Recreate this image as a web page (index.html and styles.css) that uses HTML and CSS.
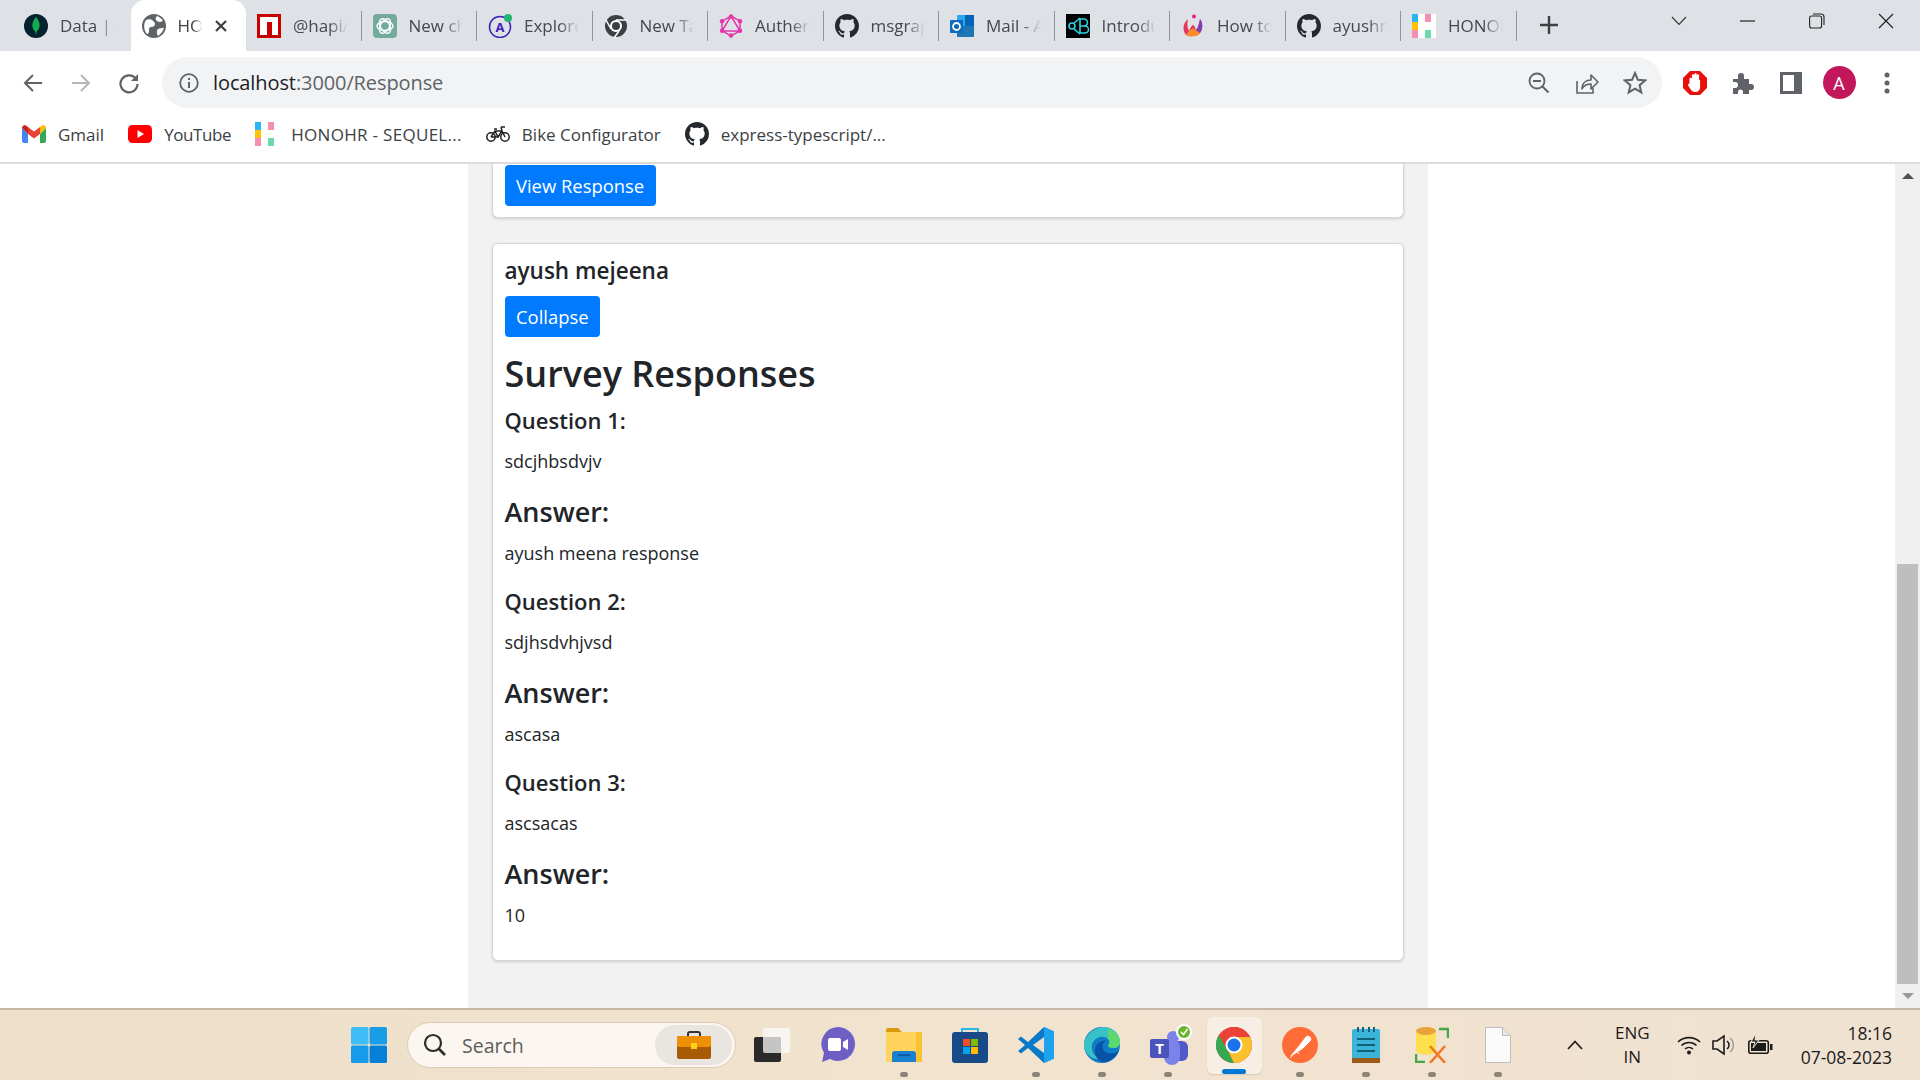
FILE: index.html
```html
<!DOCTYPE html>
<html>
<head>
    <title>HONOHR - Response</title>
    <link rel="stylesheet" href="styles.css">
</head>
<body>
    <svg class="defs" width="0" height="0">
        <symbol id="github" viewBox="0 0 16 16">
            <path d="M8 0C3.58 0 0 3.58 0 8c0 3.54 2.29 6.53 5.47 7.59.4.07.55-.17.55-.38 0-.19-.01-.82-.01-1.49-2.01.37-2.53-.49-2.69-.94-.09-.23-.48-.94-.82-1.13-.28-.15-.68-.52-.01-.53.63-.01 1.08.58 1.23.82.72 1.21 1.87.87 2.33.66.07-.52.28-.87.51-1.07-1.78-.2-3.64-.89-3.64-3.95 0-.87.31-1.59.82-2.15-.08-.2-.36-1.02.08-2.12 0 0 .67-.21 2.2.82.64-.18 1.32-.27 2-.27.68 0 1.36.09 2 .27 1.53-1.04 2.2-.82 2.2-.82.44 1.1.16 1.92.08 2.12.51.56.82 1.27.82 2.15 0 3.07-1.87 3.75-3.65 3.95.29.25.54.73.54 1.48 0 1.07-.01 1.93-.01 2.2 0 .21.15.46.55.38A8.013 8.013 0 0016 8c0-4.42-3.58-8-8-8z" fill="#24292e"/>
        </symbol>
        <symbol id="honohr" viewBox="0 0 24 24">
            <rect width="24" height="24" fill="#fff"/>
            <rect width="6" height="8" fill="#29b6f6"/>
            <rect y="8" width="6" height="8" fill="#ffc107"/>
            <rect y="16" width="6" height="8" fill="#f48fb1"/>
            <rect x="13" width="6" height="8" fill="#f48fb1"/>
            <rect x="13" y="16" width="6" height="8" fill="#69dba6"/>
        </symbol>
    </svg>

    <div class="tabstrip">
        <div class="tabs">
            <div class="tab first-tab">
                <svg class="favicon" viewBox="0 0 24 24"><circle cx="12" cy="12" r="12" fill="#04222d"/><path d="M12 3c3 3.5 4 6.5 3.5 9.5-.4 2.6-2 4.3-3 5.2l-.3 3h-.5l-.3-3c-1-.9-2.6-2.6-3-5.2C8 9.500 9 6.500 12 3z" fill="#13aa52"/></svg>
                <span class="tab-title">Data | Cloud</span>
            </div>
            <div class="tab active">
                <svg class="favicon" viewBox="0 0 24 24"><circle cx="12" cy="12" r="12" fill="#5f6368"/><path d="M4 6c2-1 5-1 6 0s3 2 3 4-2 3-4 3-2 2-2 4-1 3-2 3C2 17 1 10 4 6zM15 2c3 1 5 3 6 5l-3 1c-2 0-3-1-4-2s0-3 1-4zM16 15c2-1 4-1 6-1-1 3-3 6-6 8-1-2-2-5 0-7z" fill="#fff"/></svg>
                <span class="tab-title">HONOHR</span>
                <svg class="tab-close" viewBox="0 0 14 14"><path d="M2 2l10 10M12 2L2 12" stroke="#3c4043" stroke-width="2.200"/></svg>
            </div>
            <div class="tab">
                <svg class="favicon" viewBox="0 0 24 24"><rect width="24" height="24" fill="#c80000"/><rect x="3" y="3" width="18" height="18" fill="#fff"/><rect x="10" y="8" width="5" height="13" fill="#c80000"/></svg>
                <span class="tab-title">@hapi/joi</span>
            </div>
            <div class="tab">
                <svg class="favicon" viewBox="0 0 24 24"><rect width="24" height="24" rx="4" fill="#74aa9c"/><g fill="none" stroke="#fff" stroke-width="1.400"><ellipse cx="12" cy="12" rx="8" ry="4.500"/><ellipse cx="12" cy="12" rx="8" ry="4.500" transform="rotate(60 12 12)"/><ellipse cx="12" cy="12" rx="8" ry="4.500" transform="rotate(120 12 12)"/></g></svg>
                <span class="tab-title">New chat</span>
            </div>
            <div class="tab">
                <svg class="favicon" viewBox="0 0 24 24"><circle cx="12" cy="13" r="10.500" fill="none" stroke="#3f20ba" stroke-width="1.500"/><text x="12" y="18" class="icon-letter" fill="#3f20ba" font-size="13">A</text><circle cx="20" cy="4" r="4" fill="#22b573"/></svg>
                <span class="tab-title">Explorer</span>
            </div>
            <div class="tab">
                <svg class="favicon" viewBox="0 0 24 24"><circle cx="12" cy="12" r="11" fill="#3c4043"/><circle cx="12" cy="12" r="6" fill="#fff"/><circle cx="12" cy="12" r="4" fill="#3c4043"/><path d="M12 6h10M7 15L2 6M15 17l-5 7" stroke="#fff" stroke-width="1.500"/></svg>
                <span class="tab-title">New Tab</span>
            </div>
            <div class="tab">
                <svg class="favicon" viewBox="0 0 24 24"><path d="M12 2l9 5.200v9.600L12 22l-9-5.200V7.200zM12 2L3 17h18z" fill="none" stroke="#e535ab" stroke-width="1.500"/><g fill="#e535ab"><circle cx="12" cy="2.500" r="2.200"/><circle cx="21" cy="7.200" r="2.200"/><circle cx="21" cy="16.800" r="2.200"/><circle cx="12" cy="21.500" r="2.200"/><circle cx="3" cy="16.800" r="2.200"/><circle cx="3" cy="7.200" r="2.200"/></g></svg>
                <span class="tab-title">Authentication</span>
            </div>
            <div class="tab">
                <svg class="favicon"><use href="#github"/></svg>
                <span class="tab-title">msgraph</span>
            </div>
            <div class="tab">
                <svg class="favicon" viewBox="0 0 24 24"><rect x="7" y="1" width="17" height="22" rx="1" fill="#28a8ea"/><rect x="15" y="1" width="9" height="11" fill="#0364b8"/><path d="M7 12l17 0v11H7z" fill="#14447d" opacity=".5"/><rect y="6" width="13" height="13" rx="1" fill="#0f6cbd"/><circle cx="6.500" cy="12.500" r="3.500" fill="none" stroke="#fff" stroke-width="1.800"/></svg>
                <span class="tab-title">Mail - Ayush</span>
            </div>
            <div class="tab">
                <svg class="favicon" viewBox="0 0 24 24"><rect width="24" height="24" fill="#000"/><g fill="none" stroke="#2bd3e6" stroke-width="1.600"><circle cx="6" cy="12" r="3"/><path d="M14 5h4a3 3 0 0 1 0 7h-4zM14 12h5a3.500 3.500 0 0 1 0 7h-5zM8 9l6-5M8 15l6 5"/></g></svg>
                <span class="tab-title">Introduction</span>
            </div>
            <div class="tab">
                <svg class="favicon" viewBox="0 0 24 24"><path d="M7 5C2 9 1 16 5 21c4 2 11 2 14-2 3-4 3-10 0-14-1 5-2 9-4 11-1-3-2-5-3-5-2 1-3 4-4 6-2-3-2-8-1-12z" fill="#e8355b"/><path d="M5 21c4 2 11 2 14-2l-4-3-3-2-4 3z" fill="#fb8c23"/><path d="M19 5c3 4 3 10 0 14l-4-3c2-2 3-6 4-11z" fill="#7b3fb5"/><circle cx="13" cy="2.500" r="2" fill="#e91e8c"/></svg>
                <span class="tab-title">How to use</span>
            </div>
            <div class="tab">
                <svg class="favicon"><use href="#github"/></svg>
                <span class="tab-title">ayushmeena</span>
            </div>
            <div class="tab">
                <svg class="favicon"><use href="#honohr"/></svg>
                <span class="tab-title">HONOHR</span>
            </div>
        </div>
        <svg class="new-tab" viewBox="0 0 18 18"><path d="M9 0v18M0 9h18" stroke="#3c4043" stroke-width="2.400"/></svg>
        <div class="window-controls">
            <div class="window-btn"><svg width="16" height="10" viewBox="0 0 16 10"><path d="M1 1l7 7.500L15 1" fill="none" stroke="#333" stroke-width="1.100"/></svg></div>
            <div class="window-btn"><svg width="16" height="4" viewBox="0 0 16 4"><path d="M0 2h15" stroke="#222" stroke-width="1.200"/></svg></div>
            <div class="window-btn"><svg width="16" height="16" viewBox="0 0 16 16"><rect x=".6" y="3" width="12" height="12" rx="2" fill="none" stroke="#222" stroke-width="1.100"/><path d="M4 1h8a3 3 0 0 1 3 3v8" fill="none" stroke="#222" stroke-width="1.100"/></svg></div>
            <div class="window-btn"><svg width="16" height="16" viewBox="0 0 16 16"><path d="M1 1l14 14M15 1L1 15" stroke="#222" stroke-width="1.200"/></svg></div>
        </div>
    </div>

    <div class="toolbar">
        <div class="tool-btn"><svg width="20" height="20" viewBox="0 0 20 20"><path d="M19 10H3M10 2l-8 8 8 8" fill="none" stroke="#5f6368" stroke-width="2"/></svg></div>
        <div class="tool-btn"><svg width="20" height="20" viewBox="0 0 20 20"><path d="M1 10h16M10 2l8 8-8 8" fill="none" stroke="#b4b7bb" stroke-width="2"/></svg></div>
        <div class="tool-btn"><svg width="22" height="22" viewBox="0 0 22 22"><path d="M18 7a8.500 8.500 0 1 0 1.500 5" fill="none" stroke="#5f6368" stroke-width="2.200"/><path d="M20 2v7h-7z" fill="#5f6368"/></svg></div>
        <div class="omnibox">
            <svg class="info-icon" width="20" height="20" viewBox="0 0 20 20"><circle cx="10" cy="10" r="8.800" fill="none" stroke="#5f6368" stroke-width="1.800"/><path d="M10 9v6M10 5v2" stroke="#5f6368" stroke-width="2"/></svg>
            <span class="url"><span class="url-host">localhost</span>:3000/Response</span>
            <div class="omni-actions">
                <div class="tool-btn"><svg width="22" height="22" viewBox="0 0 22 22"><circle cx="9" cy="9" r="7.500" fill="none" stroke="#5f6368" stroke-width="1.800"/><path d="M5 9h8M14.500 14.500l6 6" stroke="#5f6368" stroke-width="2"/></svg></div>
                <div class="tool-btn"><svg width="24" height="22" viewBox="0 0 24 22"><path d="M2 9v12h16v-5" fill="none" stroke="#5f6368" stroke-width="1.600"/><path d="M7 17c0-6 4-9 9-9V3l7 7-7 7v-5c-4 0-7 1-9 5z" fill="none" stroke="#5f6368" stroke-width="1.600" stroke-linejoin="round"/></svg></div>
                <div class="tool-btn"><svg width="24" height="24" viewBox="0 0 24 24"><path d="M12 2l2.900 6.800 7.300.6-5.600 4.800 1.700 7.200-6.300-3.800-6.300 3.800 1.700-7.200-5.600-4.800 7.300-.6z" fill="none" stroke="#5f6368" stroke-width="2"/></svg></div>
            </div>
        </div>
        <div class="tool-btn"><svg width="24" height="24" viewBox="0 0 24 24"><path d="M7 0h10l7 7v10l-7 7H7l-7-7V7z" fill="#e8100d"/><path d="M6.500 12.500V8a1.200 1.200 0 0 1 2.400 0V4.500a1.200 1.200 0 0 1 2.400 0V3.500a1.200 1.200 0 0 1 2.400 0v1a1.200 1.200 0 0 1 2.400 0V9l1 0v7c0 3-2 5-5 5-2 0-3-1-4-2l-3-4.500c-.5-1 .9-2.400 1.400-2z" fill="#fff"/></svg></div>
        <div class="tool-btn"><svg width="22" height="22" viewBox="0 0 22 22"><path d="M1 7h5V4a3 3 0 0 1 6 0v3h5v5h2a3 3 0 0 1 0 6h-2v4H11v-2a2.500 2.500 0 0 0-5 0v2H1v-6h2a3 3 0 0 0 0-6H1z" fill="#5f6368"/></svg></div>
        <div class="tool-btn"><svg width="22" height="22" viewBox="0 0 22 22"><rect width="22" height="22" fill="#5f6368"/><rect x="3" y="3" width="11" height="16" fill="#fff"/></svg></div>
        <div class="tool-btn"><div class="avatar">A</div></div>
        <div class="tool-btn"><svg width="6" height="22" viewBox="0 0 6 22"><circle cx="3" cy="3" r="2.500" fill="#5f6368"/><circle cx="3" cy="11" r="2.500" fill="#5f6368"/><circle cx="3" cy="19" r="2.500" fill="#5f6368"/></svg></div>
    </div>

    <div class="bookmarks">
        <div class="bookmark">
            <svg class="bookmark-icon" viewBox="0 0 24 18"><path d="M0 3v13a2 2 0 0 0 2 2h4V9z" fill="#4285f4"/><path d="M24 3v13a2 2 0 0 1-2 2h-4V9z" fill="#34a853"/><path d="M18 9V2l3-2c1 0 3 1 3 3z" fill="#fbbc04"/><path d="M6 9V2L3 0C2 0 0 1 0 3z" fill="#c5221f"/><path d="M6 2l6 4.500L18 2v7l-6 4.500L6 9z" fill="#ea4335"/></svg>
            <span>Gmail</span>
        </div>
        <div class="bookmark">
            <svg class="bookmark-icon" viewBox="0 0 24 18"><rect width="24" height="18" rx="4.500" fill="#f00"/><path d="M9.500 5l6.500 4-6.500 4z" fill="#fff"/></svg>
            <span class="tight">YouTube</span>
        </div>
        <div class="bookmark">
            <svg class="bookmark-icon"><use href="#honohr"/></svg>
            <span class="loose">HONOHR - SEQUEL...</span>
        </div>
        <div class="bookmark">
            <svg class="bookmark-icon" viewBox="0 0 24 18"><g fill="none" stroke="#222" stroke-width="1.500"><circle cx="5" cy="12" r="4.200"/><circle cx="19" cy="12" r="4.200"/><path d="M5 12l4-6h7l3 6M9 6l3 6h-7M12 12l4-6M15 2l1 4M8 4h3M15 2h4"/></g></svg>
            <span>Bike Configurator</span>
        </div>
        <div class="bookmark">
            <svg class="bookmark-icon"><use href="#github"/></svg>
            <span>express-typescript/...</span>
        </div>
    </div>

    <div class="viewport">
        <div class="page">
            <div class="gutter">
                <div class="card card-clipped">
                    <button class="btn">View Response</button>
                </div>
                <div class="card">
                    <h5 class="card-name">ayush mejeena</h5>
                    <button class="btn">Collapse</button>
                    <h2 class="survey-title">Survey Responses</h2>
                    <h4 class="question first">Question 1:</h4>
                    <p class="value">sdcjhbsdvjv</p>
                    <h3 class="answer">Answer:</h3>
                    <p class="value after-answer">ayush meena response</p>
                    <h4 class="question">Question 2:</h4>
                    <p class="value">sdjhsdvhjvsd</p>
                    <h3 class="answer">Answer:</h3>
                    <p class="value after-answer">ascasa</p>
                    <h4 class="question">Question 3:</h4>
                    <p class="value">ascsacas</p>
                    <h3 class="answer">Answer:</h3>
                    <p class="value after-answer">10</p>
                </div>
            </div>
        </div>
        <div class="scrollbar">
            <div class="scroll-arrow up"></div>
            <div class="scroll-track"><div class="scroll-thumb"></div></div>
            <div class="scroll-arrow down"></div>
        </div>
    </div>

    <div class="taskbar">
        <div class="task-item">
            <svg width="36" height="36" viewBox="0 0 36 36"><rect width="17.500" height="17.500" rx="1.500" fill="#3fbdf7"/><rect x="18.500" width="17.500" height="17.500" rx="1.500" fill="#1a9de8"/><rect y="18.500" width="17.500" height="17.500" rx="1.500" fill="#159be9"/><rect x="18.500" y="18.500" width="17.500" height="17.500" rx="1.500" fill="#0580d8"/></svg>
        </div>
        <div class="search-pill">
            <svg width="24" height="24" viewBox="0 0 24 24"><circle cx="10" cy="10" r="8" fill="none" stroke="#2b2b2b" stroke-width="2.200"/><path d="M16 16l6 6" stroke="#2b2b2b" stroke-width="2.600"/></svg>
            <span class="search-label">Search</span>
            <div class="search-badge">
                <svg width="34" height="28" viewBox="0 0 34 28"><path d="M11 6V3a2 2 0 0 1 2-2h8a2 2 0 0 1 2 2v3" fill="none" stroke="#333" stroke-width="2"/><rect y="5" width="34" height="23" rx="2" fill="#a85a05"/><rect y="5" width="34" height="11" rx="2" fill="#ee8f05"/><rect x="14" y="12" width="6" height="6" fill="#fcd116"/></svg>
            </div>
        </div>
        <div class="task-icons">
            <div class="task-item">
                <svg width="36" height="34" viewBox="0 0 36 34"><rect y="9" width="27" height="25" rx="2" fill="#2a2a2a"/><rect x="9" width="27" height="25" rx="2" fill="#fafafa" opacity=".75"/></svg>
            </div>
            <div class="task-item">
                <svg width="34" height="36" viewBox="0 0 34 36"><path d="M17 0a17 17 0 1 1-8 32l-8 3 2-9A17 17 0 0 1 17 0z" fill="#6d5fc4"/><rect x="7" y="11" width="13" height="13" rx="2" fill="#fff"/><path d="M22 15l5-3v11l-5-3z" fill="#fff"/></svg>
            </div>
            <div class="task-item running">
                <svg width="36" height="34" viewBox="0 0 36 34"><path d="M0 2a2 2 0 0 1 2-2h10l4 4h-16z" fill="#d99a0c"/><rect y="4" width="36" height="30" rx="1" fill="#ffd45e"/><path d="M6 34V26a3 3 0 0 1 3-3h18a3 3 0 0 1 3 3v8z" fill="#1b7fd0"/><path d="M12 27h12" stroke="#0a4f91" stroke-width="1.500"/><rect x="30" y="4" width="6" height="30" fill="#f3b612" opacity=".6"/></svg>
            </div>
            <div class="task-item">
                <svg width="36" height="36" viewBox="0 0 36 36"><path d="M10 6V2h16v4" fill="none" stroke="#2ab5ee" stroke-width="2"/><rect y="5" width="36" height="31" rx="3" fill="#174a86"/><rect x="11" y="12" width="7" height="7" fill="#f25022"/><rect x="19" y="12" width="7" height="7" fill="#7fba00"/><rect x="11" y="20" width="7" height="7" fill="#00a4ef"/><rect x="19" y="20" width="7" height="7" fill="#ffb900"/></svg>
            </div>
            <div class="task-item running">
                <svg width="36" height="36" viewBox="0 0 36 36"><path d="M26 0l10 4.500v27L26 36 10 21l-7 5.500-3-2.500 7-6-7-6 3-2.500L10 15z" fill="#0a7ac8"/><path d="M26 0l10 4.500v27L26 36z" fill="#1fa3ef"/><path d="M26 10L15 18l11 8z" fill="#ecdfcb"/></svg>
            </div>
            <div class="task-item running">
                <svg width="36" height="36" viewBox="0 0 36 36"><circle cx="18" cy="18" r="18" fill="#0f7cc7"/><path d="M0 18C1 6 12 0 20 0c9 0 16 7 16 15 0 4-3 6-7 6-3 0-5-1-5-3 2-1 2-4 0-6-4-4-12-2-15 3-3 6 0 14 7 17C7 33 0 26 0 18z" fill="#36c2c6"/><path d="M24 2c7 2 12 7 12 13 0 4-3 6-7 6-3 0-5-1-5-3 2-1 2-4 0-6z" fill="#5bd86e"/><path d="M11 24c0-6 5-11 11-10-5 2-5 10 2 12 5 1 9 0 11-3-3 8-10 13-17 12-4-2-7-6-7-11z" fill="#0a52a5"/></svg>
            </div>
            <div class="task-item running">
                <svg class="teams-icon" width="42" height="42" viewBox="0 0 42 42"><circle cx="23" cy="13" r="6" fill="#7b83eb"/><rect x="16" y="17" width="22" height="20" rx="6" fill="#5059c9"/><rect x="14" y="15" width="16" height="26" rx="8" fill="#7b83eb"/><rect y="15" width="19" height="19" rx="2" fill="#4b53bc"/><text x="9.500" y="30" class="icon-letter" fill="#fff" font-size="15">T</text><circle cx="34" cy="8" r="8" fill="#fff"/><circle cx="34" cy="8" r="6" fill="#6bb42f"/><path d="M31 8l2.500 2.500L37.500 5" fill="none" stroke="#fff" stroke-width="1.500"/></svg>
            </div>
            <div class="task-item active-app">
                <svg width="36" height="36" viewBox="0 0 36 36"><circle cx="18" cy="18" r="18" fill="#ea4335"/><path d="M18 36C8 36 0 28 0 18c0-4 1-7 3-10l10 18z" fill="#34a853"/><path d="M18 36c10 0 18-8 18-18 0-3-1-6-2-8H18l-5 16z" fill="#fbc02d"/><path d="M18 10h16C31 4 25 0 18 0 12 0 7 3 3 8l7 12z" fill="#ea4335"/><circle cx="18" cy="18" r="8.500" fill="#fff"/><circle cx="18" cy="18" r="6.500" fill="#1a73e8"/></svg>
            </div>
            <div class="task-item running">
                <svg width="36" height="36" viewBox="0 0 36 36"><circle cx="18" cy="18" r="18" fill="#ff6c37"/><path d="M9 29l9-11 3 3zM18 18l6-8c1-1 3-1 4 0s1 3 0 4l-7 7M10 29l-2 2M15 24l2 3" fill="#fff" stroke="#fff" stroke-width="1"/></svg>
            </div>
            <div class="task-item running">
                <svg width="28" height="36" viewBox="0 0 28 36"><rect y="2" width="28" height="31" rx="2" fill="#3cb4d9"/><rect y="31" width="28" height="5" fill="#9c5b1a"/><path d="M6 0v5M11 0v5M17 0v5M22 0v5" stroke="#11607c" stroke-width="2"/><path d="M5 12h18M5 18h18M5 24h18" stroke="#10607e" stroke-width="2"/></svg>
            </div>
            <div class="task-item running">
                <svg width="34" height="36" viewBox="0 0 34 36"><path d="M24 2h9v9M1 27v8h9" fill="none" stroke="#46a746" stroke-width="2.500"/><path d="M1 4a8 3 0 0 1 20 0v20a8 3 0 0 1-20 0z" fill="#ffdf4d"/><ellipse cx="11" cy="4" rx="10" ry="4" fill="#e8a33d"/><path d="M15 19l15 17M30 19L15 36" stroke="#f0771c" stroke-width="2.500"/></svg>
            </div>
            <div class="task-item running">
                <svg width="26" height="36" viewBox="0 0 26 36"><path d="M.5.500h17l8 8v27H.500z" fill="#fbfbfb" stroke="#bdbdbd"/><path d="M17.500.500v8h8" fill="#e4e4e4" stroke="#bdbdbd"/></svg>
            </div>
        </div>
        <div class="tray">
            <svg class="tray-chevron" width="16" height="10" viewBox="0 0 16 10"><path d="M1 9l7-7.500L15 9" fill="none" stroke="#222" stroke-width="1.800"/></svg>
            <div class="tray-lang"><span>ENG</span><span>IN</span></div>
            <div class="tray-icons">
                <svg width="24" height="20" viewBox="0 0 24 20"><g fill="none" stroke="#1c1c1c" stroke-width="1.600"><path d="M1 7a16 16 0 0 1 22 0M4.500 10.500a11 11 0 0 1 15 0M8 14a6 6 0 0 1 8 0"/></g><circle cx="12" cy="17.500" r="2" fill="#1c1c1c"/></svg>
                <svg width="24" height="22" viewBox="0 0 24 22"><path d="M1 7h4l7-5v18l-7-5H1z" fill="none" stroke="#1c1c1c" stroke-width="1.600"/><path d="M15 7a5 5 0 0 1 0 8" fill="none" stroke="#1c1c1c" stroke-width="1.500"/><path d="M18 4a9 9 0 0 1 0 14" fill="none" stroke="#9a9184" stroke-width="1.300"/></svg>
                <svg width="26" height="24" viewBox="0 0 26 24"><rect x="1.800" y="7.800" width="19.500" height="12.500" rx="2" fill="#f0e2cf" stroke="#1c1c1c" stroke-width="1.600"/><rect x="4" y="10" width="15" height="8" fill="#1c1c1c"/><rect x="23" y="11" width="2.500" height="6" fill="#1c1c1c"/><path d="M9 0L4 9h4l-2 6 6-8H8z" fill="#1c1c1c" stroke="#f0e2cf"/></svg>
            </div>
            <div class="tray-clock"><span>18:16</span><span>07-08-2023</span></div>
        </div>
    </div>
</body>
</html>
```

FILE: styles.css
```css
* { box-sizing: border-box; }
html, body { height: 100%; }
body { margin: 0; width: 1920px; height: 1080px; overflow: hidden; display: flex; flex-direction: column; background: #fff; font-family: "Open Sans", "Noto Sans", sans-serif; color: #212529; }
.defs { display: block; height: 0; }
.icon-letter { font-family: "Open Sans", sans-serif; font-weight: 700; text-anchor: middle; }

/* tab strip */
.tabstrip { height: 51px; flex: none; display: flex; align-items: stretch; background: #dee1e6; padding-left: 15px; }
.tabs { display: flex; }
.tab { width: 115.5px; display: flex; align-items: center; padding: 0 0 0 11px; gap: 12px; position: relative; font-size: 17px; color: #45494e; }
.tab::after { content: ""; position: absolute; right: 0; top: 11px; height: 30px; width: 1px; background: #91949a; }
.first-tab { padding-left: 9px; }
.first-tab::after, .tab.active::after { display: none; }
.tab.active { background: #fff; border-radius: 14px 14px 0 0; color: #3c4043; }
.favicon { width: 24px; height: 24px; flex: none; }
.tab-title { flex: 1; min-width: 0; white-space: nowrap; overflow: hidden; margin-right: 14px; -webkit-mask-image: linear-gradient(to right, #000 65%, transparent 100%); mask-image: linear-gradient(to right, #000 65%, transparent 100%); }
.tab.active .tab-title { margin-right: 0; }
.tab-close { width: 14px; height: 14px; flex: none; margin-right: 18px; }
.new-tab { width: 18px; height: 18px; margin: 16px 0 0 23px; flex: none; }
.window-controls { margin-left: auto; display: flex; }
.window-btn { width: 69px; height: 42px; display: flex; align-items: center; justify-content: center; }

/* toolbar */
.toolbar { height: 57px; flex: none; padding: 6px 9px 0; display: flex; align-items: stretch; }
.tool-btn { width: 48px; flex: none; display: flex; align-items: center; justify-content: center; }
.omnibox { flex: 1; margin: 0 9px 0 9px; background: #f1f3f4; border-radius: 26px; display: flex; align-items: center; padding-left: 17px; font-size: 20px; }
.info-icon { flex: none; margin-right: 14px; }
.url { color: #5f6368; white-space: nowrap; letter-spacing: -.1px; }
.url-host { color: #202124; }
.omni-actions { margin-left: auto; display: flex; align-self: stretch; padding-right: 3px; }
.avatar { width: 33px; height: 33px; border-radius: 50%; background: #c2185b; color: #fff; display: flex; align-items: center; justify-content: center; font-size: 18px; }

/* bookmarks */
.bookmarks { height: 56px; flex: none; border-bottom: 2px solid #dedede; padding: 0 0 2px 22px; display: flex; align-items: center; gap: 24px; font-size: 17px; color: #3c4043; }
.bookmark { display: flex; align-items: center; gap: 12px; white-space: nowrap; }
.bookmark-icon { width: 24px; height: 24px; flex: none; }
.tight { letter-spacing: -.4px; }
.loose { letter-spacing: .3px; }

/* page */
.viewport { flex: 1; min-height: 0; display: flex; }
.page { flex: 1; min-width: 0; display: flex; justify-content: center; }
.gutter { width: 960px; background: #f2f2f2; padding: 0 24px; }
.card { background: #fff; border: 1px solid #d6d6d6; border-radius: 6px; box-shadow: 0 1px 3px rgba(0, 0, 0, .15); padding: 12px 12px 32px; margin-bottom: 25px; }
.card-clipped { border-top: none; border-radius: 0 0 6px 6px; padding: 1px 12px 11px; }
.btn { display: block; height: 41px; padding: 0 11.500px; border: none; border-radius: 4px; background: #007bff; color: #fff; font-family: inherit; font-size: 18.400px; }
.card-name { margin: 0 0 10px; font-size: 22.500px; line-height: 30px; font-weight: 600; }
.survey-title { margin: 14px 0 0; font-size: 36px; line-height: 46px; font-weight: 600; }
.question { margin: 20px 0 0; font-size: 22px; line-height: 30px; font-weight: 600; }
.question.first { margin-top: 8px; }
.answer { margin: 20px 0 0; font-size: 27px; line-height: 36px; font-weight: 600; }
.value { margin: 13px 0 0; font-size: 18px; line-height: 26px; }
.value.after-answer { margin-top: 10px; }

/* scrollbar */
.scrollbar { width: 25px; flex: none; background: #f0f0f0; padding: 0 2px; display: flex; flex-direction: column; }
.scroll-arrow { height: 24px; flex: none; display: flex; align-items: center; justify-content: center; }
.scroll-arrow::before { content: ""; border-left: 6px solid transparent; border-right: 6px solid transparent; }
.scroll-arrow.up::before { border-bottom: 6px solid #505050; }
.scroll-arrow.down::before { border-top: 6px solid #9a9a9a; }
.scroll-track { flex: 1; display: flex; flex-direction: column; justify-content: flex-end; }
.scroll-thumb { height: 420px; background: #bebebe; }

/* taskbar */
.taskbar { height: 72px; flex: none; border-top: 2px solid #c4b8a8; background: linear-gradient(to right, #eedfca, #f2e3cf 50%, #f0e2d1); padding-left: 336px; display: flex; align-items: center; }
.task-item { width: 66px; height: 57px; flex: none; display: flex; align-items: center; justify-content: center; position: relative; border-radius: 6px; }
.task-item.running::after, .task-item.active-app::after { content: ""; position: absolute; left: 50%; bottom: -3px; width: 8px; height: 5px; margin-left: -4px; border-radius: 3px; background: #8a8479; }
.task-item.active-app { background: #f7efe5; box-shadow: 0 1px 1px rgba(0, 0, 0, .12); width: 55px; margin: 0 5.500px; }
.task-item.active-app::after { width: 24px; margin-left: -12px; bottom: 0; background: #0078d4; }
.teams-icon { margin-left: 6px; }
.search-pill { width: 329px; height: 46px; flex: none; margin-left: 5px; margin-right: 3px; border-radius: 23px; background: #fbf6f0; border: 1px solid #ddccb4; display: flex; align-items: center; padding-left: 15px; }
.search-label { margin-left: 15px; font-size: 19.500px; color: #5c5c5c; }
.search-badge { margin-left: auto; margin-right: 3px; width: 77px; height: 40px; border-radius: 20px; background: #e9e6e1; display: flex; align-items: center; justify-content: center; }
.task-icons { display: flex; align-items: center; }
.tray { flex: 1; display: flex; align-items: center; padding-right: 28px; }
.tray-chevron { margin-left: 36px; }
.tray-lang { margin-left: 32px; display: flex; flex-direction: column; align-items: center; font-size: 17px; line-height: 24px; color: #1c1c1c; }
.tray-icons { margin-left: 27px; display: flex; align-items: center; gap: 11px; }
.tray-clock { margin-left: auto; display: flex; flex-direction: column; align-items: flex-end; font-size: 17.500px; line-height: 24px; color: #1c1c1c; }
```
